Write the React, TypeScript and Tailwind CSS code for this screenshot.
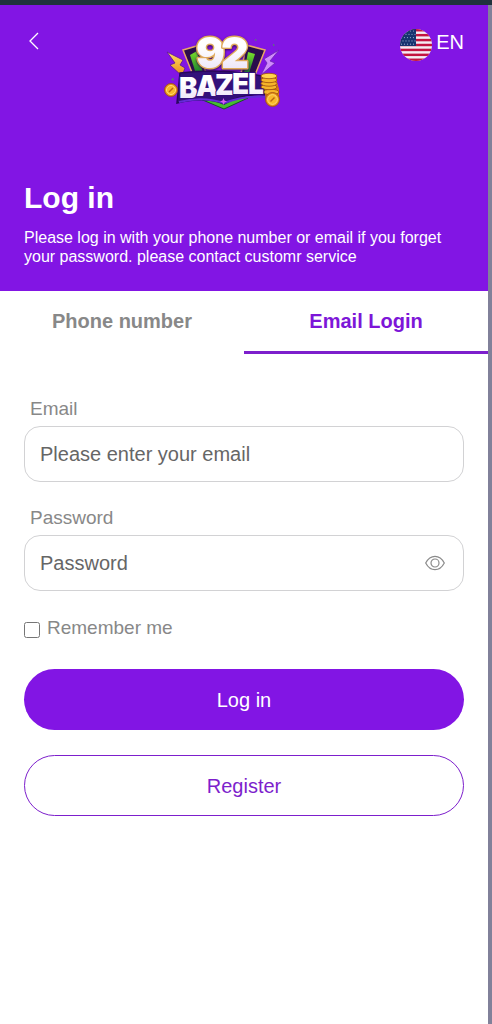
import React, { useState } from 'react';

const GAME_FONT = 'Inter, "Liberation Sans", sans-serif';

function Coin({ x, y, r }: { x: number; y: number; r: number }) {
    return (
        <g>
            <circle cx={x} cy={y} r={r} fill="#e8951c" stroke="#9c4a12" strokeWidth="0.8" />
            <circle cx={x} cy={y} r={r * 0.7} fill="#f8b92c" stroke="#ffe277" strokeWidth="0.9" />
            <path d={`M${x - 2} ${y + 2}l4-4`} stroke="#b86613" strokeWidth="1.4" />
        </g>
    );
}

function Logo() {
    return (
        <svg viewBox="0 0 145 95" className="h-[95px] w-[145px]" role="img" aria-label="92 Bazel">
            <defs>
                <linearGradient id="gold" x1="0" y1="0" x2="0" y2="1">
                    <stop offset="0" stopColor="#ffdf62" />
                    <stop offset="1" stopColor="#e98a18" />
                </linearGradient>
                <linearGradient id="face" x1="0" y1="0" x2="0" y2="1">
                    <stop offset="0.4" stopColor="#ffffff" />
                    <stop offset="1" stopColor="#e6dcf6" />
                </linearGradient>
                <linearGradient id="green" x1="0" y1="0" x2="0" y2="1">
                    <stop offset="0" stopColor="#7be02b" />
                    <stop offset="1" stopColor="#147a2c" />
                </linearGradient>
            </defs>

            {/* shield panels behind the number */}
            <path d="M33 25L50 20L56 49L43 50Z" fill="#2b0c4c" stroke="#e9a766" strokeWidth="1.5" />
            <path d="M115 25L96 20L91 49L105 50Z" fill="#2b0c4c" stroke="#e9a766" strokeWidth="1.5" />
            <path d="M40 30L47 26L53 48L46 49Z" fill="url(#green)" />
            <path d="M105 29L98 27L94 48L99 48Z" fill="url(#green)" />

            {/* lightning */}
            <path d="M17 27L33 35L30 40L35 43L32 51L20 40L25 38Z" fill="url(#gold)" stroke="#5a1693" strokeWidth="0.8" />
            <path d="M129 25L114 34L117 38L111 50L125 38L120 36Z" fill="#cf8cfb" stroke="#6c23b4" strokeWidth="0.8" />
            <path d="M21 54l3-1-1 3zM123 19l2 1-2 1zM105 14l2 1-2 1z" fill="#55836b" />

            {/* ribbon */}
            <path d="M48 73L74 84L98 73L89 72L74 78L59 72Z" fill="#46bd30" stroke="#174f2a" strokeWidth="1" />
            <path d="M30 48Q72 43 112 51L117 70Q93 68 74 79Q55 71 27 78Z" fill="#33107a" stroke="#29075c" strokeWidth="1.5" />
            <path d="M29 77Q53 71 74 78Q94 70 118 72" fill="none" stroke="#642bd8" strokeWidth="2" />
            <path d="M73.500 73l1 2.500 2.500 1-2.500 1-1 2.500-1-2.500-2.500-1 2.500-1z" fill="#d65bf0" />

            <Coin x={21} y={65} r={6.5} />
            <path d="M111 51L127 51L127 57L129 64L129 74L116 74L114 65Z" fill="#d77a16" />
            <g fill="#f6b52a" stroke="#9b4b10" strokeWidth="0.8">
                <ellipse cx="121" cy="67" rx="8" ry="2.700" />
                <ellipse cx="119" cy="62" rx="8" ry="2.700" />
                <ellipse cx="119" cy="58.500" rx="8" ry="2.700" />
                <ellipse cx="119" cy="55" rx="8" ry="2.700" />
                <ellipse cx="119" cy="51" rx="8" ry="2.700" fill="#ffd34b" />
            </g>
            <Coin x={122.5} y={74.5} r={7} />

            <g fontFamily={GAME_FONT} fontWeight="900" fill="url(#face)" strokeLinejoin="round" paintOrder="stroke">
                <text
                    x="46 71"
                    y="43"
                    fontSize="43"
                    stroke="#dfa95b"
                    strokeWidth="3"
                    className="drop-shadow-[0_1px_1px_#330b50]"
                >
                    92
                </text>
                <text fontSize="28" stroke="#32107b" strokeWidth="2" x="29 46 65 82 98" y="73 71 70 69 69">
                    BAZEL
                </text>
            </g>
        </svg>
    );
}

function Flag() {
    const stripes = [0, 1, 2, 3, 4, 5, 6];
    const rows = [0, 1, 2, 3, 4];

    return (
        <svg viewBox="0 0 32 32" className="size-8" aria-hidden="true">
            <clipPath id="round">
                <circle cx="16" cy="16" r="16" />
            </clipPath>
            <g clipPath="url(#round)">
                <path d="M0 0h32v32H0z" fill="#f4edf4" />
                {stripes.map((i) => (
                    <rect key={i} y={(i * 64) / 13} width="32" height={32 / 13} fill="#c3143f" />
                ))}
                <path d="M0 0h16v17H0z" fill="#17336f" />
                {rows.map((row) =>
                    rows.map((col) => (
                        <circle key={`${row}-${col}`} cx={1.5 + col * 3 + (row % 2) * 1.5} cy={2 + row * 3.3} r="0.6" fill="#93a9cc" />
                    ))
                )}
            </g>
        </svg>
    );
}

function EyeIcon() {
    return (
        <svg viewBox="0 0 20 16" className="h-4 w-5" fill="none" stroke="#8a8a8a" strokeWidth="1.200" aria-hidden="true">
            <path d="M.7 8C3 3.600 6.300 1.300 10 1.300S17 3.600 19.300 8C17 12.400 13.700 14.700 10 14.700S3 12.400.7 8Z" />
            <circle cx="10" cy="8" r="4" />
        </svg>
    );
}

const Field: React.FC<{
    id: string;
    label: string;
    type: string;
    placeholder: string;
    children?: React.ReactNode;
}> = ({ id, label, type, placeholder, children }) => (
    <div>
        <label htmlFor={id} className="block pl-1.5 text-[19px] leading-6 text-[#888888]">
            {label}
        </label>
        <div className="mt-[5px] flex h-14 items-center rounded-2xl border border-[#d2d2d4] pr-[18px] pl-[15px]">
            <input
                id={id}
                type={type}
                placeholder={placeholder}
                className="min-w-0 flex-1 bg-transparent text-xl text-[#333333] outline-none placeholder:text-[#666666]"
            />
            {children}
        </div>
    </div>
);

export default function App() {
    const [tab, setTab] = useState('email');
    const [showPassword, setShowPassword] = useState(false);

    const tabClass = (name: string) =>
        tab === name ? 'border-[#7d1fcc] text-[#7d16d8]' : 'border-transparent text-[#888888]';

    return (
        <div className="min-h-screen border-r-4 border-[#81819a] bg-white font-['Liberation_Sans',Arial,sans-serif]">
            <div className="-mr-1 h-[5px] bg-[#20323c]" />
            <header className="bg-[#8215e4] px-6 pt-5 pb-[25px] text-white">
                <div className="flex items-start justify-between">
                    <button type="button" aria-label="Back" className="mt-1.5 flex size-5 items-center justify-center">
                        <svg viewBox="0 0 10 18" className="h-[18px] w-2.5" fill="none" stroke="currentColor" strokeWidth="1.300">
                            <path d="M9 1L1 9l8 8" />
                        </svg>
                    </button>
                    <Logo />
                    <button type="button" className="flex items-start gap-1 text-xl leading-[34px]">
                        <span className="mt-1">
                            <Flag />
                        </span>
                        EN
                    </button>
                </div>
                <h1 className="mt-[60px] text-3xl leading-9 font-bold">Log in</h1>
                <p className="mt-3 text-base leading-[19px]">
                    Please log in with your phone number or email if you forget your password. please contact customr service
                </p>
            </header>

            <div role="tablist" className="grid grid-cols-2 text-xl font-bold">
                <button
                    type="button"
                    role="tab"
                    aria-selected={tab === 'phone'}
                    onClick={() => setTab('phone')}
                    className={`h-[63px] border-b-3 ${tabClass('phone')}`}
                >
                    Phone number
                </button>
                <button
                    type="button"
                    role="tab"
                    aria-selected={tab === 'email'}
                    onClick={() => setTab('email')}
                    className={`h-[63px] border-b-3 ${tabClass('email')}`}
                >
                    Email Login
                </button>
            </div>

            <form className="px-6 pt-[43px]" onSubmit={(e) => e.preventDefault()}>
                <div className="flex flex-col gap-6">
                    <Field id="email" label="Email" type="email" placeholder="Please enter your email" />
                    <Field id="password" label="Password" type={showPassword ? 'text' : 'password'} placeholder="Password">
                        <button type="button" aria-label="Show password" onClick={() => setShowPassword(!showPassword)}>
                            <EyeIcon />
                        </button>
                    </Field>
                </div>

                <label className="mt-[25px] flex items-start gap-[7px] text-[19px] leading-6 text-[#888888]">
                    <input type="checkbox" className="mt-1.5 size-4 accent-[#8215e4]" />
                    Remember me
                </label>

                <button type="submit" className="mt-[29px] h-[61px] w-full rounded-full bg-[#8215e4] text-xl text-white">
                    Log in
                </button>
                <button
                    type="button"
                    className="mt-[25px] h-[61px] w-full rounded-full border border-[#7d1fcc] text-xl text-[#7d1fcc]"
                >
                    Register
                </button>
            </form>
        </div>
    );
}
